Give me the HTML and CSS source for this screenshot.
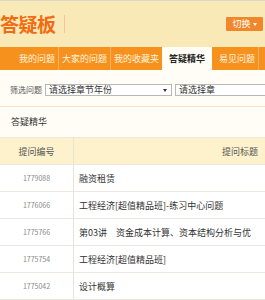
FILE: index.html
```html
<!DOCTYPE html>
<html lang="zh-CN">
<head>
    <meta charset="UTF-8">
    <meta name="viewport" content="width=device-width, initial-scale=1.0">
    <title>答疑板</title>
    <link rel="stylesheet" href="styles.css">
</head>
<body>
    <div class="page">
        <div class="top">
            <div class="logo">答疑板</div>
            <div class="logo-line"></div>
            <div class="switch">切换<span class="caret"></span></div>
        </div>
        <div class="nav">
            <a class="tab sep">我的问题</a>
            <a class="tab sep">大家的问题</a>
            <a class="tab">我的收藏夹</a>
            <a class="tab active">答疑精华</a>
            <a class="tab sep">易见问题</a>
        </div>
        <div class="filter">
            <span class="filter-label">筛选问题</span>
            <div class="select first">请选择章节年份<span class="arrow"></span></div>
            <div class="select second">请选择章</div>
        </div>
        <div class="section-title">答疑精华</div>
        <table class="list">
            <thead>
                <tr>
                    <th class="col-id">提问编号</th>
                    <th>提问标题</th>
                </tr>
            </thead>
            <tbody>
                <tr><td class="col-id">1779088</td><td class="title">融资租赁</td></tr>
                <tr><td class="col-id">1776066</td><td class="title">工程经济[超值精品班]-练习中心问题</td></tr>
                <tr><td class="col-id">1775766</td><td class="title">第03讲　资金成本计算、资本结构分析与优</td></tr>
                <tr><td class="col-id">1775754</td><td class="title">工程经济[超值精品班]</td></tr>
                <tr><td class="col-id">1775042</td><td class="title">设计概算</td></tr>
            </tbody>
        </table>
    </div>
</body>
</html>
```

FILE: styles.css
```css
body {
    margin: 0;
    background-color: #fffdf6;
    font-family: "Noto Sans CJK SC", "Noto Sans", sans-serif;
    color: #333;
}
.page {
    width: 265px;
    height: 300px;
    overflow: hidden;
}
.top {
    display: flex;
    align-items: center;
    height: 46px;
    border-top: 1px solid #dcd8cc;
    background-color: #f9e9b6;
}
.logo {
    font-size: 19px;
    font-weight: bold;
    color: #f26b12;
    line-height: 20px;
    letter-spacing: -0.5px;
}
.logo-line {
    width: 1px;
    height: 18px;
    margin-left: 8px;
    background-color: #f4c69c;
}
.switch {
    margin-left: auto;
    margin-right: 2px;
    width: 37px;
    height: 14px;
    line-height: 14px;
    background-color: #f0872a;
    border-radius: 1px;
    color: #fff;
    font-size: 9px;
    text-align: center;
}
.caret {
    display: inline-block;
    margin-left: 2px;
    vertical-align: middle;
    border-left: 2.5px solid transparent;
    border-right: 2.5px solid transparent;
    border-top: 3px solid #fff;
}
.nav {
    display: flex;
    height: 23px;
    padding-left: 16px;
    background-color: #f7911e;
}
.tab {
    flex-shrink: 0;
    padding: 0 3px;
    line-height: 23px;
    font-size: 9px;
    color: #fff4de;
}
.tab.sep {
    border-right: 1px solid #f9b46a;
}
.tab.active {
    padding: 0 7px;
    margin-right: 4px;
    background-color: #fffdf6;
    color: #222;
    font-weight: bold;
}
.filter {
    display: flex;
    align-items: center;
    height: 37px;
    padding-left: 10px;
    padding-top: 3px;
    box-sizing: border-box;
    border-bottom: 1px solid #fae0c8;
}
.filter-label {
    flex-shrink: 0;
    font-size: 8px;
    color: #555;
    margin-right: 3px;
}
.select {
    position: relative;
    flex-shrink: 0;
    height: 10px;
    line-height: 10px;
    padding: 0 3px;
    border: 1px solid #b8b8b8;
    background-color: #fff;
    font-size: 9px;
    color: #333;
}
.select.first {
    width: 119px;
}
.select.second {
    margin-left: 3px;
    width: 120px;
}
.arrow {
    position: absolute;
    right: 4px;
    top: 4px;
    border-left: 2.5px solid transparent;
    border-right: 2.5px solid transparent;
    border-top: 3px solid #333;
}
.section-title {
    height: 30px;
    line-height: 30px;
    padding-left: 11px;
    font-size: 9px;
    color: #333;
}
.list {
    width: 406px;
    border-collapse: collapse;
    table-layout: fixed;
}
.list th, .list td {
    height: 26px;
    padding: 0;
    border-top: 1px solid #ece8e0;
    border-bottom: 1px solid #ece8e0;
}
.list th {
    background-color: #fdf2cc;
    font-size: 9px;
    font-weight: normal;
    color: #555;
    text-align: center;
}
.list td {
    background-color: #fff;
}
.list .col-id {
    width: 73px;
    border-right: 1px solid #e8e4dc;
    text-align: center;
}
.list td.col-id {
    font-size: 7px;
    color: #888;
}
.list td.title {
    padding-left: 5px;
    font-size: 9px;
    color: #333;
    white-space: nowrap;
}
```
